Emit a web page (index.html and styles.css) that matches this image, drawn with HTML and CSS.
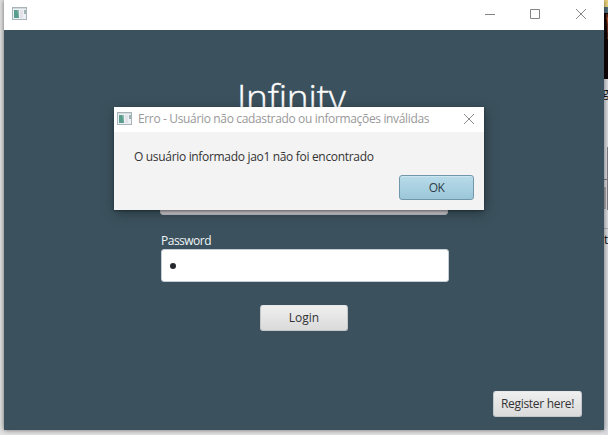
FILE: index.html
```html
<!DOCTYPE html>
<html lang="pt">
<head>
<meta charset="utf-8">
<title>Infinity</title>
<link rel="stylesheet" href="styles.css">
</head>
<body>
<div class="desktop">
  <svg class="backdrop" width="8" height="435" viewBox="0 0 8 435">
    <rect width="8" height="435" fill="#dcdde1"/>
    <rect width="8" height="7" fill="#ecd37f"/>
    <rect y="7" width="8" height="6" fill="#506f7c"/>
    <rect y="13" width="8" height="66" fill="#100607"/>
    <path d="M2 14h6v25l-3 4-2-12z" fill="#6b2c18"/>
    <path d="M3 17l2 10-1 12" fill="none" stroke="#b5562c"/>
    <path d="M3.500 147v63M0 179.500h8M1 187v22" fill="none" stroke="#827a80"/>
    <path d="M4 148h4v60H4z" fill="#b9b4ba"/>
    <path d="M0 228.500h8" stroke="#b3b2b6"/>
    <text class="caption" x="-1.500" y="97">g</text>
    <text class="caption" x="0" y="244">t</text>
  </svg>
  <main class="window">
    <header class="titlebar">
      <svg class="app-icon" width="16" height="14" viewBox="0 0 16 14"><use href="#app"/></svg>
      <svg class="controls" width="104" height="12" viewBox="0 0 104 12" fill="none" stroke="#858585">
        <path d="M0 6.500h10M45.500 1.500h9v9h-9zM91 1l10 10M101 1L91 11"/>
      </svg>
    </header>
    <section class="content">
      <h1 class="brand">Infinity</h1>
      <form class="login">
        <div class="field user"></div>
        <label class="label"><span>Password</span></label>
        <div class="field password"><i class="dot"></i></div>
        <button class="button submit" type="button">Login</button>
      </form>
      <button class="button register" type="button">Register here!</button>
    </section>
  </main>
  <section class="dialog">
    <header class="dialog-title">
      <svg class="app-icon" width="16" height="14" viewBox="0 0 16 14">
        <g id="app">
          <rect x=".5" y=".5" width="14" height="12" fill="#eef1f4" stroke="#a9b4ba"/>
          <path d="M1 1.500h13" stroke="#d3dade"/>
          <rect x="2" y="3" width="5" height="8" fill="#5a9c8d"/>
          <path d="M5 3h2v8z" fill="#8ab8ae"/>
          <rect x="8" y="3" width="3" height="8" fill="#e2e2e8"/>
          <rect x="12" y="3" width="2" height="4" fill="#9db5b3"/>
        </g>
      </svg>
      <span class="dialog-name">Erro - Usuário não cadastrado ou informações inválidas</span>
      <svg class="close" width="10" height="10" viewBox="0 0 10 10" stroke="#8c8c8c"><path d="M0 0l10 10M10 0L0 10"/></svg>
    </header>
    <div class="dialog-body">
      <p class="message">O usuário informado jao1 não foi encontrado</p>
      <button class="button ok" type="button">OK</button>
    </div>
  </section>
</div>
</body>
</html>
```
FILE: styles.css
```css
* { box-sizing: border-box; }
body { margin: 0; font: 12px/16px "Open Sans", "Noto Sans", sans-serif; }
.desktop {
  position: relative;
  width: 608px;
  height: 435px;
  padding-left: 4px;
  overflow: hidden;
  background: #e2e2e2;
}
.backdrop { position: absolute; left: 604px; top: 0; }
.caption { font-size: 12px; fill: #111; }
.window {
  position: relative;
  width: 600px;
  height: 430px;
  background: #3b525e;
  box-shadow: 0 0 5px rgba(0, 0, 0, .55);
}
.titlebar {
  display: flex;
  align-items: center;
  justify-content: space-between;
  height: 30px;
  padding: 0 15px 2px 8px;
  background: #fff;
}
.controls { display: block; }
.content {
  display: flex;
  flex-direction: column;
  height: 400px;
  padding: 39px 22px 13px 156px;
}
.brand {
  height: 56px;
  margin: 0 0 0 77px;
  font-size: 37px;
  font-weight: 300;
  line-height: 56px;
  letter-spacing: -.2px;
  color: #fff;
  -webkit-text-stroke: .4px #fff;
}
.login {
  display: flex;
  flex-direction: column;
  width: 289px;
  margin-top: 57px;
}
.field {
  display: flex;
  align-items: center;
  height: 33px;
  border: 1px solid #c5ced5;
  border-radius: 3px;
  background: #fff;
}
.user { width: 288px; background: #cfccd2; border-color: #c1c0c7; }
.label {
  height: 34px;
  padding: 18px 0 0 1px;
  color: #f0f4f6;
  letter-spacing: -.5px;
}
.password { width: 288px; margin-left: 1px; padding-left: 8px; }
.dot { width: 6px; height: 6px; border-radius: 50%; background: #25282c; }
.button {
  padding: 0;
  font: inherit;
  color: #333;
  border: 1px solid #c3c7ca;
  border-top-color: #e5e7e9;
  border-radius: 3px;
  background: linear-gradient(#efefef, #dadada);
}
.submit { width: 88px; height: 26px; margin: 23px 0 0 100px; }
.register { width: 89px; height: 26px; margin: auto 0 0 auto; letter-spacing: -.3px; }
.dialog {
  position: absolute;
  left: 114px;
  top: 107px;
  width: 370px;
  height: 103px;
  background: #f3f3f3;
  box-shadow: 0 1px 2px rgba(0, 0, 0, .35), 1px 3px 12px rgba(0, 0, 0, .35);
}
.dialog-title {
  display: flex;
  align-items: center;
  height: 25px;
  padding: 0 10px 1px 3px;
  color: #999;
  background: #fff;
}
.dialog-name { margin-left: 5px; white-space: nowrap; letter-spacing: -.35px; }
.close { margin-left: auto; }
.dialog-body { display: flex; flex-direction: column; padding: 17px 10px 0 20px; }
.message { margin: 0; color: #333; letter-spacing: -.32px; }
.ok {
  width: 75px;
  height: 25px;
  margin: 10px 0 0 auto;
  color: #303e46;
  letter-spacing: -.5px;
  border-color: #7198aa;
  background: linear-gradient(#b8dbe9, #9bc7d9);
  box-shadow: inset 0 1px #c9e6f2;
}
```
